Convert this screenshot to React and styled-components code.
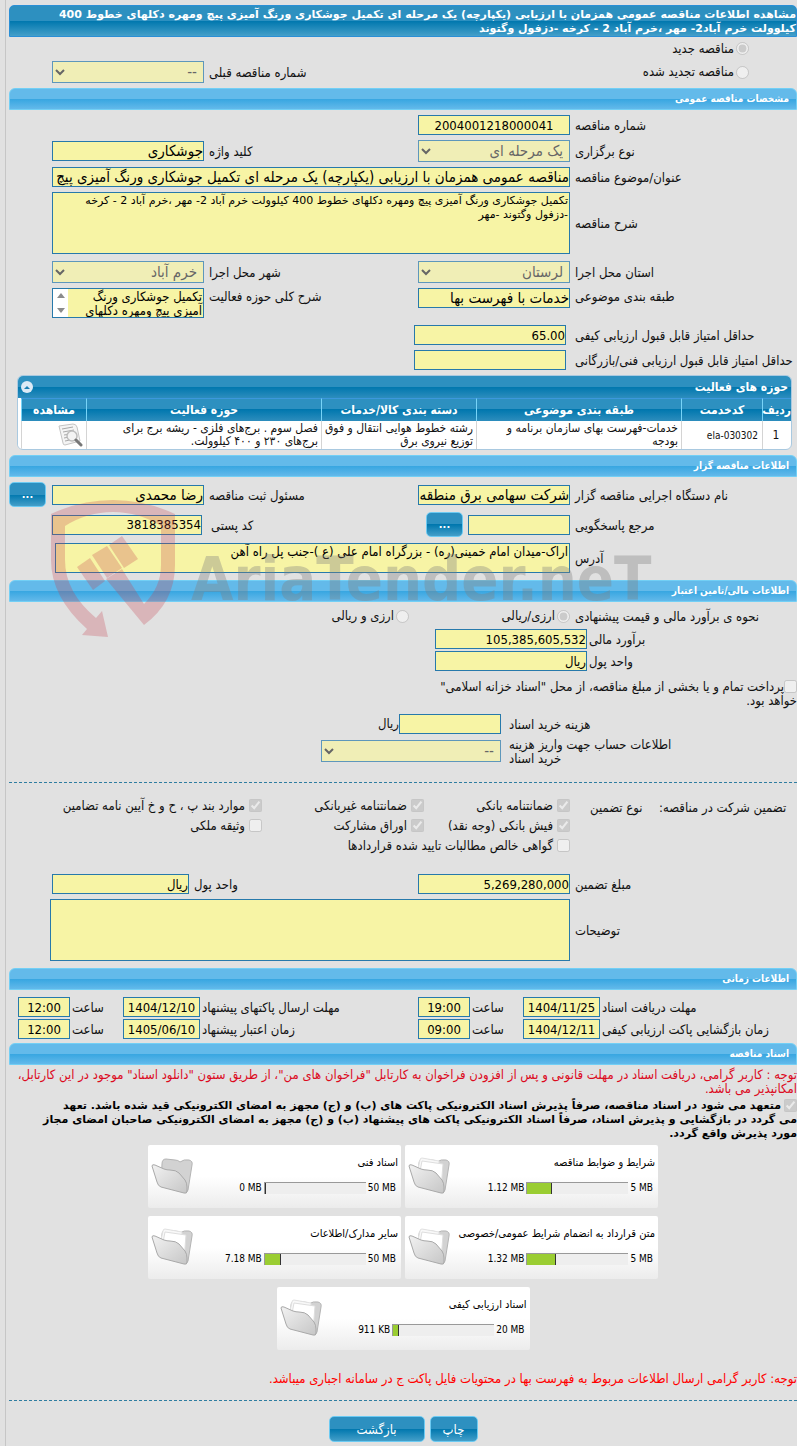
import React from 'react';
import styled, { createGlobalStyle } from 'styled-components';

const GlobalStyle = createGlobalStyle`
  * {
    box-sizing: border-box;
  }

  body {
    margin: 0;
    background: #e1e1e1;
    color: #111111;
    font-family: 'DejaVu Sans Condensed', 'DejaVu Sans', sans-serif;
    font-size: 13px;
    line-height: 14px;
  }

  input,
  select,
  textarea,
  button {
    margin: 0;
    font-family: inherit;
  }
`;

const Page = styled.main`
  margin-left: 5px;
  padding: 5px 0 5px 3px;
  border-left: 1px solid #c6c6c6;
  overflow: hidden;
`;

const TitleBar = styled.h1`
  margin: 0;
  padding: 2px 0 0;
  border: 1px solid #2a8fd6;
  border-radius: 5px 5px 0 0;
  background: linear-gradient(#2d90c0 50%, #0077ae 50%, #449fc9);
  color: #ffffff;
  font-family: 'DejaVu Sans', sans-serif;
  font-size: 11px;
  font-weight: bold;
  line-height: 14px;
`;

const SectionBar = styled.h2`
  margin: ${(props) => props.$top || 5}px 0 0;
  padding: 0 7px;
  border: 1px solid #72cff5;
  border-radius: 6px 6px 0 0;
  background: linear-gradient(#63baea 50%, #37a6e1 50%, #63b9ea);
  color: #ffffff;
  font-size: 10px;
  font-weight: bold;
  line-height: 20px;
`;

const Row = styled.div`
  display: grid;
  grid-template-columns: ${(props) => props.$columns || '227px 152px 1fr 152px 43px'};
  align-items: ${(props) => props.$align || 'center'};
  margin-top: ${(props) => props.$top || 5}px;
`;

const Label = styled.label`
  padding-top: 2px;
  padding-left: ${(props) => props.$pad || 5}px;
  text-align: left;
`;

const TextInput = styled.input`
  width: 100%;
  min-width: 0;
  height: 20px;
  padding: 0;
  border: 1px solid #2779ab;
  border-radius: 0;
  outline: 0;
  background: #f7f4a5;
  color: #000000;
  font-size: ${(props) => (props.$large ? 15 : 13)}px;
  text-align: ${(props) => (props.$center ? 'center' : 'right')};
`;

const TextArea = styled.textarea`
  display: block;
  width: 100%;
  height: ${(props) => props.$height}px;
  padding: 1px;
  border: 1px solid #2779ab;
  outline: 0;
  resize: none;
  overflow: hidden;
  background: #f7f4a5;
  color: #000000;
  font-size: 13px;
  line-height: 14px;
`;

const WideTextArea = styled(TextArea)`
  font-family: 'DejaVu Sans', sans-serif;
  font-size: 11px;
`;

const Select = styled.select`
  width: 100%;
  height: 22px;
  padding: 0 2px;
  border: 1px solid #2779ab;
  border-radius: 0;
  background-color: #f7f4a5;
  color: #333333;
  font-size: 15px;
`;

const ScrollBox = styled.div`
  display: flex;
  height: 30px;
  border: 1px solid #2779ab;

  textarea {
    flex: 1;
    min-width: 0;
    height: 28px;
    border: 0;
  }
`;

const ScrollTrack = styled.div`
  display: flex;
  flex-direction: column;
  justify-content: space-between;
  align-items: center;
  width: 15px;
  padding: 4px 0;
  background: #ffffff;
`;

const Choice = styled.label`
  display: flex;
  align-items: center;
  gap: ${(props) => props.$gap || 2}px;
  height: 13px;
  margin-top: ${(props) => props.$top || 0}px;
  padding-right: ${(props) => props.$indent || 0}px;
  white-space: nowrap;

  input {
    flex: none;
    width: 13px;
    height: 13px;
  }
`;

const Group = styled.div`
  display: flex;
  align-items: center;
  gap: 5px;
  padding-left: 8px;
`;

const Button = styled.button`
  flex: none;
  width: ${(props) => props.$width}px;
  height: 26px;
  padding: 0;
  border: 1px solid #6ccaf2;
  border-radius: 5px;
  background: linear-gradient(#2d90c0 50%, #0077ae 50%, #449fc9);
  color: #ffffff;
  font-size: 13px;
`;

const DotsButton = styled(Button)`
  width: 37px;
  height: 25px;
  justify-self: end;
  font-size: 11px;
  font-weight: bold;
`;

const Panel = styled.section`
  margin: 5px 5px 0 8px;
  border: 1px solid #a9c9e0;
  border-radius: 6px;
  overflow: hidden;
  background: #ffffff;
  font-size: 12px;
`;

const PanelHead = styled.div`
  display: flex;
  align-items: center;
  justify-content: space-between;
  height: 22px;
  padding: 0 3px;
  background: linear-gradient(#2d90c0 50%, #0077ae 50%, #2d8dbd);
  color: #ffffff;
  font-weight: bold;
`;

const Collapse = styled.button`
  display: flex;
  align-items: center;
  justify-content: center;
  width: 12px;
  height: 12px;
  padding: 0;
  border: 0;
  border-radius: 50%;
  background: #dceaf6;
`;

const Table = styled.table`
  width: 100%;
  border-collapse: separate;
  border-spacing: 0;
  border-left: 3px solid #ffffff;
  table-layout: fixed;
  line-height: 13px;

  thead tr {
    background: linear-gradient(#2d90c0 50%, #0077ae 50%, #2d8dbd);
    color: #ffffff;
  }

  th {
    height: 23px;
    padding: 0;
    border-top: 1px solid #3c98dd;
    border-left: 1px solid #77d3f7;
    white-space: nowrap;
  }

  td {
    height: 28px;
    padding: 0 3px 0 1px;
    border-left: 1px solid #d4d4d4;
  }

  td.middle {
    text-align: center;
  }

  td.code {
    font-size: 10px;
    text-align: right;
  }

  svg {
    display: block;
  }
`;

const Employer = styled.div`
  position: relative;
`;

const Watermark = styled.div`
  position: absolute;
  top: 44px;
  left: 41px;
  display: flex;
  align-items: center;
  gap: 15px;
  direction: ltr;
  pointer-events: none;
  color: rgba(128, 128, 128, 0.36);
  font-family: 'Liberation Sans Narrow', 'DejaVu Sans Condensed', sans-serif;
  font-size: 61px;
  font-weight: bold;
  line-height: 61px;
  white-space: nowrap;

  span {
    padding-top: 18px;
  }

  svg {
    flex: none;
  }
`;

const Treasury = styled.label`
  display: block;
  margin-top: 9px;

  input {
    width: 13px;
    height: 13px;
    vertical-align: top;
  }
`;

const Divider = styled.hr`
  margin: ${(props) => props.$top}px 0 0;
  border: 0;
  border-top: 1px dashed #2f7da0;
`;

const Guarantee = styled.div`
  display: grid;
  grid-template-columns: 139px 88px 146px 162px 1fr;
  grid-auto-rows: 20px;
  margin-top: 16px;
  white-space: nowrap;
`;

const Notice = styled.p`
  margin: ${(props) => props.$top}px 0 0;
  color: ${(props) => props.color};
`;

const Commitment = styled.label`
  display: block;
  margin-top: 3px;
  color: #000000;
  font-family: 'DejaVu Sans', sans-serif;
  font-size: 11px;
  font-weight: bold;

  input {
    width: 13px;
    height: 13px;
    margin-left: 3px;
    vertical-align: top;
  }
`;

const Cards = styled.div`
  display: flex;
  flex-wrap: wrap;
  justify-content: center;
  gap: 8px 4px;
  max-width: 520px;
  margin: 4px auto 0;
`;

const Card = styled.article`
  display: flex;
  justify-content: space-between;
  width: 253px;
  height: 63px;
  padding: 11px 3px;
  border-radius: 2px;
  background: linear-gradient(#ffffff 50%, #ececec);
  color: #000000;
`;

const CardBody = styled.div`
  flex: 1;
  font-size: 11px;
  white-space: nowrap;
`;

const Usage = styled.div`
  display: flex;
  align-items: center;
  gap: 2px;
  margin-top: 11px;
  padding-right: 2px;
  font-size: 10px;
`;

const Meter = styled.div`
  width: 102px;
  height: 12px;
  border-top: 1px solid #999999;
  border-left: 1px solid #999999;
  background: #eeeeee;
  direction: ltr;
`;

const MeterFill = styled.div`
  height: 11px;
  border-right: 1px solid #333333;
  background: #9acd32;
`;

const Footer = styled.footer`
  display: flex;
  justify-content: center;
  gap: 5px;
  margin-top: 15px;
`;

const TIME_COLUMNS = '197px 77px 53px 52px 1fr 77px 53px 52px 9px';

const documents = [
  { title: 'شرایط و ضوابط مناقصه', used: '1.12 MB', total: '5 MB', fill: 24, papers: true },
  { title: 'اسناد فنی', used: '0 MB', total: '50 MB', fill: 1, papers: false },
  { title: 'متن قرارداد به انضمام شرایط عمومی/خصوصی', used: '1.32 MB', total: '5 MB', fill: 28, papers: true },
  { title: 'سایر مدارک/اطلاعات', used: '7.18 MB', total: '50 MB', fill: 16, papers: true },
  { title: 'اسناد ارزیابی کیفی', used: '911 KB', total: '20 MB', fill: 6, papers: true },
];

const schedule = [
  ['مهلت دریافت اسناد', '1404/11/25', '19:00', 'مهلت ارسال پاکتهای پیشنهاد', '1404/12/10', '12:00'],
  ['زمان بازگشایی پاکت ارزیابی کیفی', '1404/12/11', '09:00', 'زمان اعتبار پیشنهاد', '1405/06/10', '12:00'],
];

const FolderIcon = ({ papers }) => (
  <svg width="44" height="40" viewBox="0 0 44 40" aria-hidden="true">
    <defs>
      <linearGradient id="folderFront" x1="0" y1="0" x2="1" y2="1">
        <stop offset="0" stopColor="#f2f2f2" />
        <stop offset="1" stopColor="#c6c6c6" />
      </linearGradient>
    </defs>
    <path
      d="M11 8 Q11 3 15 3 L24 4 Q27 4 29 6 Q33 3 38 4 Q42 5 41 9 L37 34 Q36 38 33 36 L10 28Z"
      fill="#d2d2d2"
      stroke="#b4b4b4"
    />
    {papers && (
      <>
        <path d="M8 22 L12 4 Q12 2 14 2 L31 5 L30 32Z" fill="#f8f8f8" stroke="#e2e2e2" />
        <path d="M10 26 L14 5 L35 8 L33 34Z" fill="#ffffff" stroke="#dedede" />
      </>
    )}
    <path
      d="M1 10 Q1 8 4 9 L13 13 Q16 14 19 14 Q25 14 28 17 L34 24 Q36 27 36 31 L36 35 Q36 38 33 37 L10 31 Q7 30 6 26Z"
      fill="url(#folderFront)"
      stroke="#a9a9a9"
    />
  </svg>
);

const ViewIcon = () => (
  <svg width="25" height="24" viewBox="0 0 25 24" aria-hidden="true">
    <path d="M1 3 L15 1 Q18 1 19 4 L22 18 L7 22 Q5 22 5 20Z" fill="#f4f4f4" stroke="#c4c4c4" />
    <path d="M4 6 L15 4 M5 9 L16 7 M6 12 L13 11 M6 15 L11 14 M7 18 L12 17" stroke="#a8a8a8" fill="none" />
    <circle cx="14" cy="13" r="5" fill="#f3f3f3" stroke="#bdbdbd" strokeWidth="1.5" />
    <path d="M18 17 L23 22" stroke="#777777" strokeWidth="3" strokeLinecap="round" />
  </svg>
);

const ShieldLogo = () => (
  <svg width="126" height="140" viewBox="49 499 126 140" aria-hidden="true">
    <g fill="#c3404c" fillOpacity="0.27">
      <path d="M50 514 Q80 500 112 500 Q144 500 174 514 L174 565 Q174 602 143 625 L105 579 L121 569 L143 604 Q160 587 160 565 L160 526 Q138 512 112 512 Q86 512 64 526 L64 560 Q64 592 95 618 L101 611 L107 637 L81 635 L86 629 Q50 597 50 560Z" />
      <path d="M76 567 L89 558 L104 581 L92 590Z" />
      <path d="M91 555 L106 546 L121 568 L106 578Z" />
      <path d="M108 545 L121 536 L137 559 L123 568Z" />
    </g>
  </svg>
);

const App = () => {
  return (
    <>
      <GlobalStyle />
      <Page dir="rtl" lang="fa">
        <TitleBar>
          مشاهده اطلاعات مناقصه عمومی همزمان با ارزیابی (یکپارچه) یک مرحله ای تکمیل جوشکاری ورنگ آمیزی پیچ ومهره دکلهای خطوط 400
          <br />
          کیلوولت خرم آباد2- مهر ،خرم آباد 2 - کرخه -دزفول وگتوند
        </TitleBar>
        <Choice $indent={48} $top={5}>
          <input type="radio" name="kind" defaultChecked disabled />
          مناقصه جدید
        </Choice>
        <Row $columns="379px 1fr 152px 43px" $top={6}>
          <Choice $indent={48}>
            <input type="radio" name="kind" disabled />
            مناقصه تجدید شده
          </Choice>
          <Label htmlFor="previous">شماره مناقصه قبلی</Label>
          <Select id="previous" disabled>
            <option>--</option>
          </Select>
        </Row>

        <SectionBar>مشخصات مناقصه عمومی</SectionBar>
        <Row>
          <Label htmlFor="number">شماره مناقصه</Label>
          <TextInput id="number" $center readOnly defaultValue="2004001218000041" />
        </Row>
        <Row>
          <Label htmlFor="method">نوع برگزاری</Label>
          <Select id="method" disabled>
            <option>یک مرحله ای</option>
          </Select>
          <Label htmlFor="keyword">کلید واژه</Label>
          <TextInput id="keyword" $large readOnly defaultValue="جوشکاری" />
        </Row>
        <Row $columns="227px 1fr 43px">
          <Label htmlFor="subject">عنوان/موضوع مناقصه</Label>
          <TextInput
            id="subject"
            $large
            readOnly
            defaultValue="مناقصه عمومی همزمان با ارزیابی (یکپارچه) یک مرحله ای تکمیل جوشکاری ورنگ آمیزی پیچ ومهره"
          />
        </Row>
        <Row $columns="227px 1fr 43px">
          <Label htmlFor="description">شرح مناقصه</Label>
          <WideTextArea
            id="description"
            $height={62}
            readOnly
            defaultValue="تکمیل جوشکاری ورنگ آمیزی پیچ ومهره دکلهای خطوط 400 کیلوولت خرم آباد 2- مهر ،خرم آباد 2 - کرخه -دزفول وگتوند -مهر"
          />
        </Row>
        <Row $top={7}>
          <Label htmlFor="province">استان محل اجرا</Label>
          <Select id="province" disabled>
            <option>لرستان</option>
          </Select>
          <Label htmlFor="city">شهر محل اجرا</Label>
          <Select id="city" disabled>
            <option>خرم آباد</option>
          </Select>
        </Row>
        <Row $align="start">
          <Label htmlFor="category">طبقه بندی موضوعی</Label>
          <TextInput id="category" $large readOnly defaultValue="خدمات با فهرست بها" />
          <Label htmlFor="scope">شرح کلی حوزه فعالیت</Label>
          <ScrollBox>
            <TextArea id="scope" $height={28} readOnly defaultValue="تکمیل جوشکاری ورنگ آمیزی پیچ ومهره دکلهای" />
            <ScrollTrack>
              <svg width="8" height="5" aria-hidden="true">
                <path d="M0 5 L4 0 L8 5Z" fill="#8b8b8b" />
              </svg>
              <svg width="8" height="5" aria-hidden="true">
                <path d="M0 0 L4 5 L8 0Z" fill="#8b8b8b" />
              </svg>
            </ScrollTrack>
          </ScrollBox>
        </Row>
        <Row $columns="231px 152px 1fr" $top={7}>
          <Label htmlFor="quality" $pad={9}>حداقل امتیاز قابل قبول ارزیابی کیفی</Label>
          <TextInput id="quality" readOnly defaultValue="65.00" />
        </Row>
        <Row $columns="231px 152px 1fr">
          <Label htmlFor="technical" $pad={9}>حداقل امتیاز قابل قبول ارزیابی فنی/بازرگانی</Label>
          <TextInput id="technical" readOnly />
        </Row>

        <Panel>
          <PanelHead>
            حوزه های فعالیت
            <Collapse type="button" aria-label="بستن">
              <svg width="6" height="3" aria-hidden="true">
                <path d="M0 3 L3 0 L6 3Z" fill="#1b7fb3" />
              </svg>
            </Collapse>
          </PanelHead>
          <Table>
            <colgroup>
              <col width="29" />
              <col width="81" />
              <col width="205" />
              <col width="155" />
              <col width="235" />
              <col width="65" />
            </colgroup>
            <thead>
              <tr>
                <th>ردیف</th>
                <th>کدخدمت</th>
                <th>طبقه بندی موضوعی</th>
                <th>دسته بندی کالا/خدمات</th>
                <th>حوزه فعالیت</th>
                <th>مشاهده</th>
              </tr>
            </thead>
            <tbody>
              <tr>
                <td className="middle">1</td>
                <td className="code" dir="ltr">ela-030302</td>
                <td>
                  خدمات-فهرست بهای سازمان برنامه و
                  <br />
                  بودجه
                </td>
                <td>
                  رشته خطوط هوایی انتقال و فوق
                  <br />
                  توزیع نیروی برق
                </td>
                <td>
                  فصل سوم . برج‌های فلزی - ریشه برج برای
                  <br />
                  برج‌های ۲۳۰ و ۴۰۰ کیلوولت.
                </td>
                <td>
                  <ViewIcon />
                </td>
              </tr>
            </tbody>
          </Table>
        </Panel>

        <Employer>
          <SectionBar>اطلاعات مناقصه گزار</SectionBar>
          <Row>
            <Label htmlFor="company">نام دستگاه اجرایی مناقصه گزار</Label>
            <TextInput id="company" $large readOnly defaultValue="شرکت سهامی برق منطقه" />
            <Label htmlFor="officer">مسئول ثبت مناقصه</Label>
            <TextInput id="officer" $large readOnly defaultValue="رضا محمدی" />
            <DotsButton type="button">...</DotsButton>
          </Row>
          <Row $columns="227px 152px 1fr 150px 43px">
            <Label htmlFor="contact">مرجع پاسخگویی</Label>
            <Group>
              <TextInput id="contact" readOnly />
              <DotsButton type="button">...</DotsButton>
            </Group>
            <Label htmlFor="postal" $pad={9}>کد پستی</Label>
            <TextInput id="postal" readOnly defaultValue="3818385354" />
          </Row>
          <Row $columns="227px 1fr 46px" $top={6}>
            <Label htmlFor="address">آدرس</Label>
            <TextArea
              id="address"
              $height={30}
              readOnly
              defaultValue="اراک-میدان امام خمینی(ره) - بزرگراه امام علی (ع )-جنب پل راه آهن"
            />
          </Row>
          <SectionBar $top={7}>اطلاعات مالی/تامین اعتبار</SectionBar>
          <Watermark>
            <ShieldLogo />
            <span>AriaTender.neT</span>
          </Watermark>
        </Employer>

        <Row $columns="227px 161px 1fr" $top={6}>
          <Label as="span">نحوه ی برآورد مالی و قیمت پیشنهادی</Label>
          <Choice>
            <input type="radio" name="currency" defaultChecked disabled />
            ارزی/ریالی
          </Choice>
          <Choice>
            <input type="radio" name="currency" disabled />
            ارزی و ریالی
          </Choice>
        </Row>
        <Row $columns="210px 152px 1fr" $top={5}>
          <Label htmlFor="estimate" $pad={2}>برآورد مالی</Label>
          <TextInput id="estimate" readOnly defaultValue="105,385,605,532" />
        </Row>
        <Row $columns="210px 152px 1fr" $top={2}>
          <Label htmlFor="unit" $pad={2}>واحد پول</Label>
          <TextInput id="unit" readOnly defaultValue="ریال" />
        </Row>
        <Treasury>
          <input type="checkbox" disabled />
          پرداخت تمام و یا بخشی از مبلغ مناقصه، از محل "اسناد خزانه اسلامی"
          <br />
          خواهد بود.
        </Treasury>
        <Row $columns="296px 102px 1fr" $top={6}>
          <Label htmlFor="fee" $pad={8}>هزینه خرید اسناد</Label>
          <TextInput id="fee" readOnly />
          <span>ریال</span>
        </Row>
        <Row $columns="296px 180px 1fr" $top={2}>
          <Label htmlFor="account" $pad={8}>
            اطلاعات حساب جهت واریز هزینه
            <br />
            خرید اسناد
          </Label>
          <Select id="account" disabled>
            <option>--</option>
          </Select>
        </Row>

        <Divider $top={16} />
        <Guarantee>
          <Label as="span" $pad={1}>تضمین شرکت در مناقصه:</Label>
          <Label as="span" $pad={20}>نوع تضمین</Label>
          <Choice $gap={4}>
            <input type="checkbox" defaultChecked disabled />
            ضمانتنامه بانکی
          </Choice>
          <Choice $gap={4}>
            <input type="checkbox" defaultChecked disabled />
            ضمانتنامه غیربانکی
          </Choice>
          <Choice $gap={4}>
            <input type="checkbox" defaultChecked disabled />
            موارد بند پ ، ح و خ آیین نامه تضامین
          </Choice>
          <span />
          <span />
          <Choice $gap={4}>
            <input type="checkbox" defaultChecked disabled />
            فیش بانکی (وجه نقد)
          </Choice>
          <Choice $gap={4}>
            <input type="checkbox" defaultChecked disabled />
            اوراق مشارکت
          </Choice>
          <Choice $gap={4}>
            <input type="checkbox" disabled />
            وثیقه ملکی
          </Choice>
          <span />
          <span />
          <Choice $gap={4}>
            <input type="checkbox" disabled />
            گواهی خالص مطالبات تایید شده قراردادها
          </Choice>
        </Guarantee>
        <Row $columns="227px 152px 1fr 137px 43px" $top={15}>
          <Label htmlFor="amount">مبلغ تضمین</Label>
          <TextInput id="amount" readOnly defaultValue="5,269,280,000" />
          <Label htmlFor="amountUnit">واحد پول</Label>
          <TextInput id="amountUnit" readOnly defaultValue="ریال" />
        </Row>
        <Row $columns="227px 1fr 41px">
          <Label htmlFor="notes">توضیحات</Label>
          <TextArea id="notes" $height={62} readOnly />
        </Row>

        <SectionBar $top={7}>اطلاعات زمانی</SectionBar>
        {schedule.map(([firstLabel, firstDate, firstTime, secondLabel, secondDate, secondTime], index) => (
          <Row key={firstLabel} $columns={TIME_COLUMNS} $top={index ? 2 : 7}>
            <Label htmlFor={`date-a-${index}`} $pad={2}>{firstLabel}</Label>
            <TextInput id={`date-a-${index}`} $center readOnly defaultValue={firstDate} />
            <Label htmlFor={`time-a-${index}`} $pad={2}>ساعت</Label>
            <TextInput id={`time-a-${index}`} $center readOnly defaultValue={firstTime} />
            <Label htmlFor={`date-b-${index}`} $pad={2}>{secondLabel}</Label>
            <TextInput id={`date-b-${index}`} $center readOnly defaultValue={secondDate} />
            <Label htmlFor={`time-b-${index}`} $pad={2}>ساعت</Label>
            <TextInput id={`time-b-${index}`} $center readOnly defaultValue={secondTime} />
          </Row>
        ))}

        <SectionBar $top={4}>اسناد مناقصه</SectionBar>
        <Notice color="#dc0a1e" $top={3}>
          توجه : کاربر گرامی، دریافت اسناد در مهلت قانونی و پس از افزودن فراخوان به کارتابل "فراخوان های من"، از طریق ستون "دانلود اسناد" موجود در این کارتابل،
          <br />
          امکانپذیر می باشد.
        </Notice>
        <Commitment>
          <input type="checkbox" defaultChecked disabled />
          متعهد می شود در اسناد مناقصه، صرفاً پذیرش اسناد الکترونیکی پاکت های (ب) و (ج) مجهز به امضای الکترونیکی قید شده باشد. تعهد
          <br />
          می گردد در بازگشایی و پذیرش اسناد، صرفاً اسناد الکترونیکی پاکت های پیشنهاد (ب) و (ج) مجهز به امضای الکترونیکی صاحبان امضای مجاز
          <br />
          مورد پذیرش واقع گردد.
        </Commitment>
        <Cards>
          {documents.map((doc) => (
            <Card key={doc.title}>
              <CardBody>
                {doc.title}
                <Usage>
                  <bdi>{doc.total}</bdi>
                  <Meter>
                    <MeterFill style={{ width: `${doc.fill}%` }} />
                  </Meter>
                  <bdi>{doc.used}</bdi>
                </Usage>
              </CardBody>
              <FolderIcon papers={doc.papers} />
            </Card>
          ))}
        </Cards>
        <Notice color="#ff0000" $top={22}>
          توجه: کاربر گرامی ارسال اطلاعات مربوط به فهرست بها در محتویات فایل پاکت ج در سامانه اجباری میباشد.
        </Notice>
        <Divider $top={14} />
        <Footer>
          <Button type="button" $width={48}>چاپ</Button>
          <Button type="button" $width={96}>بازگشت</Button>
        </Footer>
      </Page>
    </>
  );
};

export default App;
